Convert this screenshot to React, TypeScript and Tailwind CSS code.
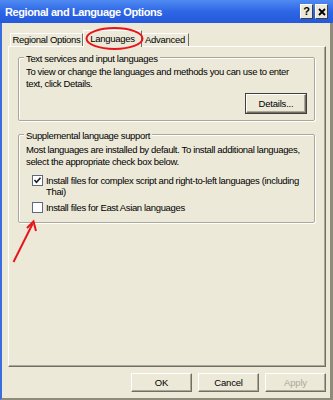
import React from "react";

function Btn({ label, disabled, focused, w = "w-[61px]" }: { label: string; disabled?: boolean; focused?: boolean; w?: string }) {
  return (
    <div
      className={`${w} h-[19px] flex items-center justify-center text-[9.5px] leading-[12px] tracking-[-0.2px] bg-[#ECE9D8] border-t border-l border-t-white border-l-white border-r border-b border-r-[#716F64] border-b-[#716F64] shadow-[inset_-1px_-1px_0_#ACA899] ${
        disabled ? "text-[#ACA899]" : "text-black"
      } ${focused ? "outline outline-1 outline-[#404040]" : ""}`}
    >
      {label}
    </div>
  );
}

function Check({ checked }: { checked?: boolean }) {
  return (
    <div className="w-[11px] h-[11px] shrink-0 border border-[#5A6A80] bg-white flex items-center justify-center">
      {checked && (
        <svg width="9" height="9" viewBox="0 0 9 9">
          <path d="M1.5 4 L3.5 6.2 L7.5 1.8" stroke="#1a1a1a" strokeWidth="1.6" fill="none" />
        </svg>
      )}
    </div>
  );
}

export default function App() {
  return (
    <div className="w-[333px] h-[400px] overflow-hidden relative bg-[#ECE9D8] flex flex-col font-['Liberation_Sans',Arial,sans-serif] text-black">
      {/* Title bar */}
      <div className="h-[23px] shrink-0 flex items-center bg-gradient-to-b from-[#4F8AF2] via-[#2E66E4] to-[#2459DB] pl-[5px] pr-[5px]">
        <div className="text-white font-bold text-[11px] leading-[14px] tracking-[-0.4px] whitespace-nowrap">
          Regional and Language Options
        </div>
        <div className="ml-auto flex gap-[2px] items-center">
          <div className="w-[13px] h-[15px] bg-[#ECE9D8] border-t border-l border-white border-r border-b border-r-[#404040] border-b-[#404040] flex items-center justify-center text-[11px] font-bold leading-none">
            ?
          </div>
          <div className="w-[13px] h-[15px] bg-[#ECE9D8] border-t border-l border-white border-r border-b border-r-[#404040] border-b-[#404040] flex items-center justify-center">
            <svg width="8" height="8" viewBox="0 0 8 8">
              <path d="M1 1 L7 7 M7 1 L1 7" stroke="#000" strokeWidth="1.8" />
            </svg>
          </div>
        </div>
      </div>

      {/* Body */}
      <div className="flex-1 flex flex-col border-l-2 border-l-[#3A6EE0] border-r-[3px] border-r-[#8E8B7B] border-b-2 border-b-[#8E8B7B] pl-[6px]">
        {/* Tabs */}
        <div className="mt-[7px] h-[16px] flex items-end pl-[2px] relative z-10 text-[9.5px] leading-[12px] tracking-[-0.3px] whitespace-nowrap">
          <div className="w-[73px] h-[13px] border-t border-l border-white border-r border-r-[#716F64] flex items-center justify-center">
            Regional Options
          </div>
          <div className="w-[59px] h-[17px] -mb-px bg-[#ECE9D8] border-t border-l border-white border-r border-r-[#716F64] flex items-center justify-center pb-[1px]">
            Languages
          </div>
          <div className="w-[47px] h-[13px] border-t border-white border-r border-r-[#716F64] flex items-center justify-center">
            Advanced
          </div>
        </div>

        {/* Panel */}
        <div className="w-[318px] h-[321px] border-t border-l border-white border-r border-b border-r-[#716F64] border-b-[#716F64] shadow-[inset_-1px_-1px_0_#ACA899] pl-[9px] pt-[10px] flex flex-col text-[9.5px] leading-[12px] tracking-[-0.35px]">
          {/* Group 1 */}
          <div className="w-[297px] h-[64px] border border-[#ACA899] rounded-[2px] shadow-[inset_1px_1px_0_white,1px_1px_0_white] flex flex-col pl-[7px]">
            <div className="-mt-[5px] -ml-[2px] px-[2px] self-start bg-[#ECE9D8] whitespace-nowrap">
              Text services and input languages
            </div>
            <div className="mt-[1px] whitespace-nowrap leading-[11.5px]">
              To view or change the languages and methods you can use to enter
              <br />
              text, click Details.
            </div>
            <div className="mt-[5px] self-end mr-[8px]">
              <Btn label="Details..." w="w-[60px]" focused />
            </div>
          </div>

          {/* Group 2 */}
          <div className="mt-[13px] w-[297px] h-[89px] border border-[#ACA899] rounded-[2px] shadow-[inset_1px_1px_0_white,1px_1px_0_white] flex flex-col pl-[7px]">
            <div className="-mt-[5px] -ml-[2px] px-[2px] self-start bg-[#ECE9D8] whitespace-nowrap">
              Supplemental language support
            </div>
            <div className="mt-[2px] whitespace-nowrap leading-[11.5px]">
              Most languages are installed by default. To install additional languages,
              <br />
              select the appropriate check box below.
            </div>
            <div className="mt-[8px] flex items-start pl-[6px] gap-[3px]">
              <Check checked />
              <div className="whitespace-nowrap leading-[11px]">
                Install files for complex script and right-to-left languages (including
                <br />
                Thai)
              </div>
            </div>
            <div className="mt-[5px] flex items-start pl-[6px] gap-[3px]">
              <Check />
              <div className="whitespace-nowrap leading-[11px]">Install files for East Asian languages</div>
            </div>
          </div>
        </div>

        {/* Buttons */}
        <div className="mt-[6px] h-[19px] flex justify-end gap-[6px] pr-[4px]">
          <Btn label="OK" />
          <Btn label="Cancel" />
          <Btn label="Apply" disabled />
        </div>
      </div>

      {/* Red annotations */}
      <svg className="absolute left-0 top-0 z-20 pointer-events-none" width="333" height="400" viewBox="0 0 333 400">
        <ellipse cx="114.5" cy="38.5" rx="28" ry="10.5" fill="none" stroke="#E8141B" strokeWidth="2" />
        <path d="M13.5 262 L32.5 224" stroke="#E8141B" strokeWidth="2" fill="none" />
        <path d="M27 228 L33.5 221.5 L36 231" stroke="#E8141B" strokeWidth="2" fill="none" />
      </svg>
    </div>
  );
}
